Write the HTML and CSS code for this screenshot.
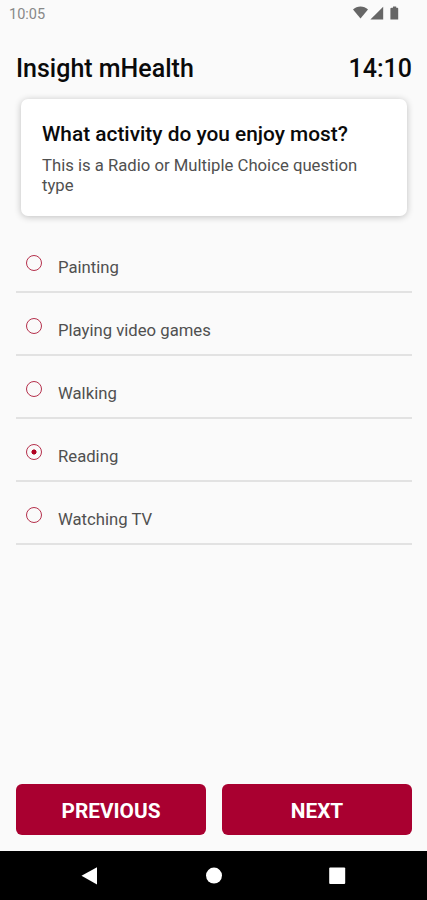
FILE: index.html
```
<!DOCTYPE html>
<html lang="en">

<head>
  <meta charset="UTF-8">
  <meta name="viewport" content="width=device-width, initial-scale=1.0">
  <title>Insight mHealth</title>
  <link rel="stylesheet" href="styles.css">
</head>

<body>
  <div class="status-bar">
    <span class="status-time">10:05</span>
    <svg class="status-icons" width="48" height="16" viewBox="0 0 48 16">
      <path d="M0 4.4C4 0.4 11 0.4 15 4.4L7.5 13.6z" />
      <path d="M30.2 1.8V14.4H17.4z" />
      <path d="M38.8 2.8H40V1.4H43.2V2.8H44.4Q45.2 2.8 45.2 3.6V14.4H37.4V3.6Q37.4 2.8 38.8 2.8z" />
    </svg>
  </div>

  <header class="header">
    <h1>Insight mHealth</h1>
    <span class="timer">14:10</span>
  </header>

  <div class="card">
    <h2>What activity do you enjoy most?</h2>
    <p>This is a Radio or Multiple Choice question type</p>
  </div>

  <div class="options">
    <label class="option"><input type="radio" name="activity"><span>Painting</span></label>
    <label class="option"><input type="radio" name="activity"><span>Playing video games</span></label>
    <label class="option"><input type="radio" name="activity"><span>Walking</span></label>
    <label class="option"><input type="radio" name="activity" checked><span>Reading</span></label>
    <label class="option"><input type="radio" name="activity"><span>Watching TV</span></label>
  </div>

  <div class="buttons">
    <button>PREVIOUS</button>
    <button>NEXT</button>
  </div>

  <div class="nav-bar">
    <svg width="18" height="20" viewBox="0 0 18 20">
      <path d="M0.5 9.8L16 1.2V18.4z" />
    </svg>
    <svg width="18" height="20" viewBox="0 0 18 20">
      <circle cx="9" cy="9.6" r="8" />
    </svg>
    <svg width="18" height="20" viewBox="0 0 18 20">
      <rect x="0.2" y="1.4" width="16" height="16.6" rx="1" />
    </svg>
  </div>
</body>

</html>
```

FILE: styles.css
```
* {
  box-sizing: border-box;
}

body {
  font-family: Roboto, sans-serif;
  margin: 0;
  display: flex;
  flex-direction: column;
  height: 900px;
  background-color: #fafafa;
  color: #0a0a0a;
}

h1,
h2,
p {
  margin: 0;
}

.status-bar {
  display: flex;
  justify-content: space-between;
  height: 28px;
  padding: 5px 26px 0 9px;
}

.status-time {
  font-size: 14.5px;
  line-height: 19px;
  color: #888;
}

.status-icons {
  fill: #666;
}

.header {
  display: flex;
  justify-content: space-between;
  align-items: center;
  height: 71px;
  padding: 0 15px 0 16px;
}

.header h1,
.timer {
  margin-top: 11px;
  font-size: 25px;
  font-weight: 500;
  line-height: 28px;
}

.card {
  height: 117px;
  margin: 0 20px 0 21px;
  padding: 23px 40px 0 21px;
  border-radius: 7px;
  background-color: white;
  box-shadow: 0 1px 7px rgba(0, 0, 0, 0.24);
}

.card h2 {
  font-size: 20.85px;
  font-weight: 500;
  line-height: 24px;
  white-space: nowrap;
}

.card p {
  margin-top: 10px;
  font-size: 16.7px;
  line-height: 20px;
  color: #505050;
}

.options {
  margin: 14px 15px 0 16px;
}

.option {
  display: flex;
  height: 63px;
  padding: 25px 0 0 10px;
  border-bottom: 2px solid #e2e2e2;
  font-size: 16.7px;
  line-height: 26px;
  color: #505050;
}

.option input {
  appearance: none;
  width: 16px;
  height: 16px;
  margin: 0 16px 0 0;
  border: 1.5px solid #b5304c;
  border-radius: 50%;
}

.option input:checked {
  background: radial-gradient(circle, #b00020 2.2px, transparent 2.9px);
}

.buttons {
  display: flex;
  gap: 16px;
  margin-top: auto;
  padding: 0 15px 16px 16px;
}

button {
  flex: 1;
  height: 51px;
  padding: 2px 0 0;
  border: none;
  border-radius: 6px;
  background-color: #a90030;
  color: white;
  font-family: inherit;
  font-size: 20.8px;
  font-weight: 700;
}

.nav-bar {
  display: flex;
  justify-content: center;
  align-items: center;
  gap: 106px;
  height: 49px;
  background-color: black;
}

.nav-bar svg {
  fill: white;
}
```
